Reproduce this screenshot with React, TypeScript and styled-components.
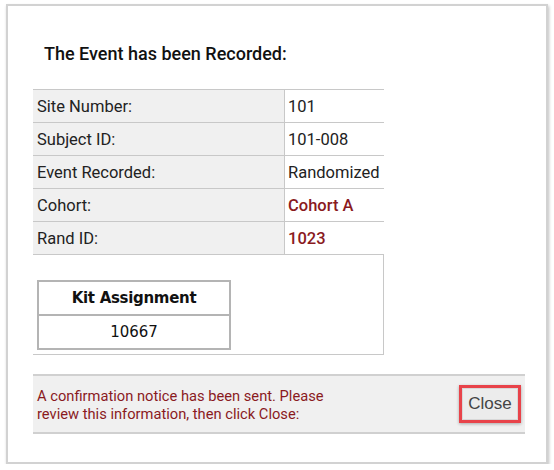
import React from "react";
import styled, { createGlobalStyle } from "styled-components";

const Global = createGlobalStyle`
  html, body { margin: 0; padding: 0; background: #ffffff; }
  body { font-family: Roboto, "Liberation Sans", Arial, sans-serif; }
`;

const Frame = styled.div`
  box-sizing: border-box;
  margin: 4px 0 0 6px;
  width: 542px;
  height: 460px;
  border: 2px solid #d2d2d2;
  box-shadow: 1px 2px 3px rgba(0, 0, 0, 0.25);
  background: #fff;
  padding: 35px 0 0 25px;
  display: flex;
  flex-direction: column;
`;

const Title = styled.h1`
  margin: 0 0 22px 11px;
  font-family: Roboto, sans-serif;
  font-weight: 500;
  font-size: 18px;
  line-height: 26px;
  color: #111;
`;

const InfoTable = styled.div`
  width: 351px;
  display: grid;
  grid-template-columns: 252px 99px;
  border-top: 1px solid #c8c8c8;
  border-right: 1px solid #c8c8c8;
  box-sizing: border-box;
`;

const Label = styled.div`
  height: 33px;
  box-sizing: border-box;
  background: #f0f0f0;
  border-bottom: 1px solid #c8c8c8;
  border-right: 1px solid #c8c8c8;
  padding-left: 4px;
  display: flex;
  align-items: center;
  font-size: 16.5px;
  color: #222;
`;

const Value = styled.div<{ $accent?: boolean }>`
  height: 33px;
  box-sizing: border-box;
  background: #fff;
  border-bottom: 1px solid #c8c8c8;
  padding-left: 3px;
  display: flex;
  align-items: center;
  font-size: 16.5px;
  color: ${(p) => (p.$accent ? "#8a1a1e" : "#222")};
  font-weight: ${(p) => (p.$accent ? 500 : 400)};
  white-space: nowrap;
`;

const KitRow = styled.div`
  grid-column: 1 / 3;
  height: 100px;
  box-sizing: border-box;
  border-bottom: 1px solid #c8c8c8;
  padding: 25px 0 0 4px;
`;

const KitTable = styled.div`
  width: 194px;
  box-sizing: border-box;
  border: 2px solid #b4b4b4;
  display: flex;
  flex-direction: column;
  font-family: "DejaVu Sans", Verdana, sans-serif;
  color: #111;
`;

const KitCell = styled.div<{ $head?: boolean }>`
  height: ${(p) => (p.$head ? "34px" : "32px")};
  box-sizing: border-box;
  display: flex;
  align-items: center;
  justify-content: center;
  font-size: 15px;
  font-weight: ${(p) => (p.$head ? 700 : 400)};
  letter-spacing: ${(p) => (p.$head ? "-0.3px" : "0")};
  border-bottom: ${(p) => (p.$head ? "2px solid #b4b4b4" : "none")};
`;

const Footer = styled.div`
  margin-top: 19px;
  width: 492px;
  height: 60px;
  box-sizing: border-box;
  background: #f0f0f0;
  border-top: 2px solid #d0d0d0;
  border-bottom: 2px solid #d0d0d0;
  display: flex;
  align-items: center;
  justify-content: space-between;
  padding: 0 4px 0 4px;
`;

const Notice = styled.p`
  margin: 0;
  font-size: 14.7px;
  line-height: 18px;
  color: #8a1a1e;
  padding-top: 1px;
`;

const CloseButton = styled.button`
  width: 62px;
  height: 38px;
  box-sizing: border-box;
  border: 3px solid #e8434a;
  background: #ececec;
  box-shadow: inset 0 0 0 1px #d8d8d8, 0 1px 3px rgba(0, 0, 0, 0.3);
  font-family: "Liberation Sans", Arial, sans-serif;
  font-size: 17px;
  color: #444;
  padding: 0;
  cursor: pointer;
`;

const rows: { label: string; value: string; accent?: boolean }[] = [
  { label: "Site Number:", value: "101" },
  { label: "Subject ID:", value: "101-008" },
  { label: "Event Recorded:", value: "Randomized" },
  { label: "Cohort:", value: "Cohort A", accent: true },
  { label: "Rand ID:", value: "1023", accent: true },
];

export default function App() {
  return (
    <>
      <Global />
      <Frame>
        <Title>The Event has been Recorded:</Title>
        <InfoTable>
          {rows.map((r) => (
            <React.Fragment key={r.label}>
              <Label>{r.label}</Label>
              <Value $accent={r.accent}>{r.value}</Value>
            </React.Fragment>
          ))}
          <KitRow>
            <KitTable>
              <KitCell $head>Kit Assignment</KitCell>
              <KitCell>10667</KitCell>
            </KitTable>
          </KitRow>
        </InfoTable>
        <Footer>
          <Notice>
            A confirmation notice has been sent. Please
            <br />
            review this information, then click Close:
          </Notice>
          <CloseButton>Close</CloseButton>
        </Footer>
      </Frame>
    </>
  );
}
